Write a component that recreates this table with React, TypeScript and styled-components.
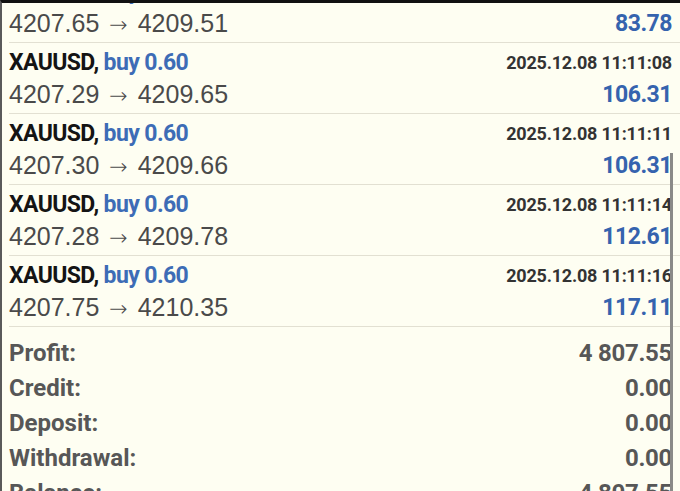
import React from "react";
import styled, { createGlobalStyle } from "styled-components";

const Global = createGlobalStyle`
  html, body { margin: 0; padding: 0; background: #fefef2; }
  * { box-sizing: border-box; }
`;

const Screen = styled.div`
  position: relative;
  width: 680px;
  height: 491px;
  overflow: hidden;
  background: #fefef2;
  border-top: 3px solid #111;
  border-left: 2px solid #5a5a5a;
`;

const List = styled.div`
  display: flex;
  flex-direction: column;
  margin-top: -31px;
  padding-left: 7px;
`;

const Row = styled.div`
  display: flex;
  flex-direction: column;
  padding: 3px 8px 3px 0;
  border-bottom: 1px solid #e2e0d2;
`;

const Line = styled.div`
  display: flex;
  align-items: center;
  justify-content: space-between;
  height: 32px;
  white-space: nowrap;
`;

const Symbol = styled.span`
  font-family: Roboto, "Liberation Sans", sans-serif;
  font-weight: 700;
  font-size: 23px;
  letter-spacing: -0.6px;
  color: #141414;
`;

const Side = styled.span`
  color: #3d6cb6;
`;

const Time = styled.span`
  font-family: Roboto, "Liberation Sans", sans-serif;
  font-weight: 700;
  font-size: 18px;
  letter-spacing: -0.2px;
  color: #333;
`;

const Price = styled.span`
  font-family: "Liberation Sans", "DejaVu Sans", sans-serif;
  font-size: 25px;
  color: #4a4a4a;
`;

const Arrow = styled.span`
  font-family: "DejaVu Sans", sans-serif;
  font-size: 22px;
  font-weight: 200;
  margin: 0 3px;
`;

const Value = styled.span`
  font-family: Roboto, "Liberation Sans", sans-serif;
  font-weight: 700;
  font-size: 23px;
  letter-spacing: -0.5px;
  color: #3563ae;
`;

const Summary = styled.div`
  display: flex;
  flex-direction: column;
  padding: 8px 8px 0 0;
`;

const SumRow = styled.div`
  display: flex;
  justify-content: space-between;
  align-items: center;
  height: 35px;
  font-family: Roboto, "Liberation Sans", sans-serif;
  font-weight: 700;
  font-size: 24px;
  color: #575757;
  white-space: nowrap;
`;

const SumValue = styled.span`
  letter-spacing: -0.3px;
`;

const Scrollbar = styled.div`
  position: absolute;
  right: 7px;
  top: 150px;
  bottom: 0;
  width: 3px;
  background: #8a8a88;
`;

const trades = [
  { time: "2025.12.08 11:11:05", open: "4207.65", close: "4209.51", profit: "83.78" },
  { time: "2025.12.08 11:11:08", open: "4207.29", close: "4209.65", profit: "106.31" },
  { time: "2025.12.08 11:11:11", open: "4207.30", close: "4209.66", profit: "106.31" },
  { time: "2025.12.08 11:11:14", open: "4207.28", close: "4209.78", profit: "112.61" },
  { time: "2025.12.08 11:11:16", open: "4207.75", close: "4210.35", profit: "117.11" },
];

const totals = [
  ["Profit:", "4 807.55"],
  ["Credit:", "0.00"],
  ["Deposit:", "0.00"],
  ["Withdrawal:", "0.00"],
  ["Balance:", "4 807.55"],
];

export default function App() {
  return (
    <>
      <Global />
      <Screen>
        <List>
          {trades.map((t, i) => (
            <Row key={i}>
              <Line>
                <Symbol>
                  XAUUSD, <Side>buy 0.60</Side>
                </Symbol>
                <Time>{t.time}</Time>
              </Line>
              <Line>
                <Price>
                  {t.open} <Arrow>→</Arrow> {t.close}
                </Price>
                <Value>{t.profit}</Value>
              </Line>
            </Row>
          ))}
          <Summary>
            {totals.map(([k, v]) => (
              <SumRow key={k}>
                <span>{k}</span>
                <SumValue>{v}</SumValue>
              </SumRow>
            ))}
          </Summary>
        </List>
        <Scrollbar />
      </Screen>
    </>
  );
}
